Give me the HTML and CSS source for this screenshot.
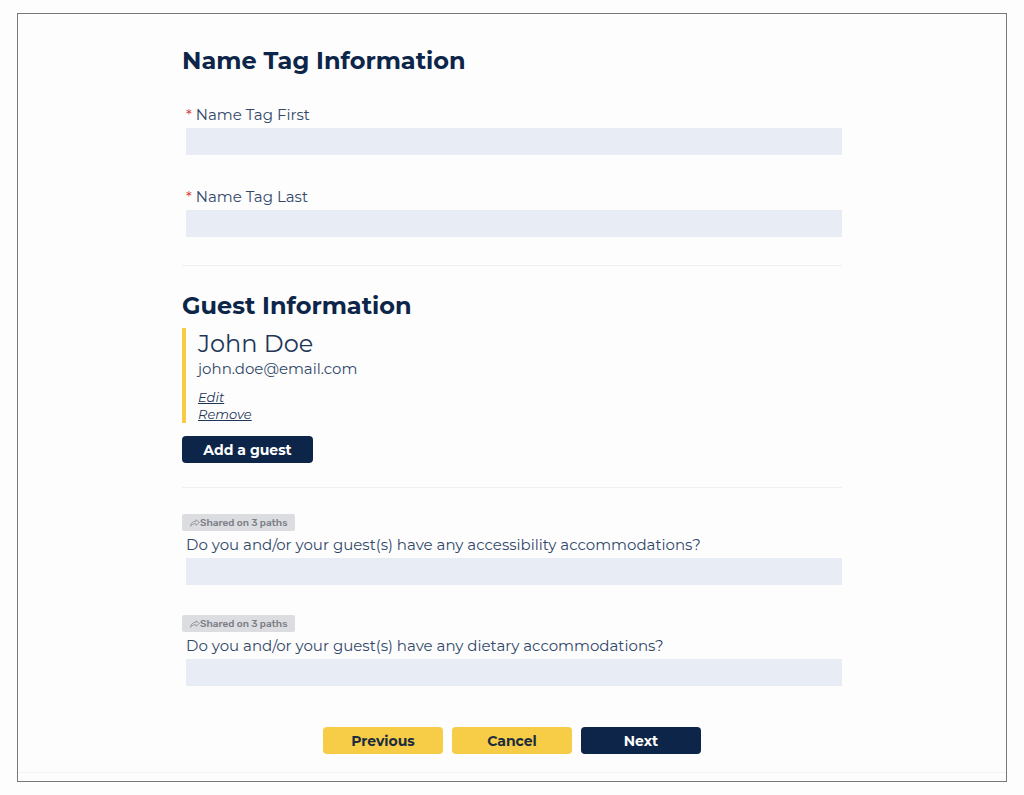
FILE: index.html
```
<!DOCTYPE html>
<html lang="en">
<head>
  <meta charset="UTF-8">
  <meta name="viewport" content="width=device-width, initial-scale=1">
  <title>Event Registration</title>
  <link rel="stylesheet" href="styles.css">
</head>
<body>
  <main class="page">
    <form class="form">
      <section class="section">
        <h2>Name Tag Information</h2>
        <div class="field name-field">
          <label for="tagFirst"><span class="required">*</span> Name Tag First</label>
          <input type="text" id="tagFirst" required>
        </div>
        <div class="field name-field">
          <label for="tagLast"><span class="required">*</span> Name Tag Last</label>
          <input type="text" id="tagLast" required>
        </div>
      </section>

      <section class="section guests">
        <h2>Guest Information</h2>
        <div class="guest">
          <div class="guest-name">John Doe</div>
          <div class="guest-email">john.doe@email.com</div>
          <a href="#edit">Edit</a>
          <a href="#remove">Remove</a>
        </div>
        <button type="button" class="btn btn-dark btn-add">Add a guest</button>
      </section>

      <section class="section questions">
        <div class="question">
          <span class="badge">
            <svg class="share" viewBox="0 0 20 16" aria-hidden="true"><path d="M12 1.500 L19 7 L12 12.500 V9.500 C7 9 4 10.500 1 14.500 C1.500 8.500 5.500 4.800 12 4.500 Z"/></svg>Shared on 3 paths
          </span>
          <div class="field">
            <label for="accessibility">Do you and/or your guest(s) have any accessibility accommodations?</label>
            <input type="text" id="accessibility">
          </div>
        </div>
        <div class="question">
          <span class="badge">
            <svg class="share" viewBox="0 0 20 16" aria-hidden="true"><path d="M12 1.500 L19 7 L12 12.500 V9.500 C7 9 4 10.500 1 14.500 C1.500 8.500 5.500 4.800 12 4.500 Z"/></svg>Shared on 3 paths
          </span>
          <div class="field">
            <label for="dietary">Do you and/or your guest(s) have any dietary accommodations?</label>
            <input type="text" id="dietary">
          </div>
        </div>
      </section>

      <div class="actions">
        <button type="button" class="btn btn-yellow">Previous</button>
        <button type="button" class="btn btn-yellow">Cancel</button>
        <button type="submit" class="btn btn-dark">Next</button>
      </div>
    </form>
  </main>
</body>
</html>
```
FILE: styles.css
```
* {
  box-sizing: border-box;
}

body {
  margin: 0;
  padding: 13px 17px;
  background: #fdfdfd;
  color: #0c2548;
  font-family: Montserrat, Inter, sans-serif;
  font-size: 15px;
  line-height: 20px;
}

.page {
  border: 1px solid #77787a;
  padding: 31px 0 8px;
}

.form {
  border-bottom: 1px solid #f3f3f4;
}

.section,
.actions {
  max-width: 660px;
  margin: 0 auto;
}

.section + .section {
  border-top: 1px solid #f1f1f3;
}

h2 {
  margin: 0;
  font-size: 24px;
  line-height: 32px;
  font-weight: 700;
}

.field {
  display: flex;
  flex-direction: column;
  gap: 3px;
  padding-left: 4px;
}

.name-field {
  padding-top: 28px;
  padding-bottom: 4px;
}

.name-field:last-child {
  padding-bottom: 28px;
}

label {
  color: #31486a;
}

.required {
  color: #d93a35;
}

input {
  width: 100%;
  height: 27px;
  padding: 0 8px;
  border: none;
  background: #e8ecf5;
  color: inherit;
  font: inherit;
}

.guests {
  padding: 24px 0;
}

.guest {
  display: flex;
  flex-direction: column;
  align-items: flex-start;
  margin: 6px 0 13px;
  padding-left: 12px;
  border-left: 4px solid #f7cc46;
}

.guest-name {
  color: #1e3658;
  font-size: 24px;
  line-height: 31px;
  font-weight: 400;
}

.guest-email {
  margin-bottom: 10px;
  color: #31486a;
}

.guest a {
  color: #1e3658;
  font-size: 13px;
  line-height: 17px;
  font-style: italic;
}

.btn {
  width: 120px;
  height: 27px;
  padding: 0;
  border: none;
  border-radius: 4px;
  font: inherit;
  font-size: 14px;
  font-weight: 700;
  cursor: pointer;
}

.btn-dark {
  background: #0c2548;
  color: #fff;
}

.btn-yellow {
  background: #f7cc46;
  color: #1a2d40;
}

.btn-add {
  display: block;
  width: 131px;
}

.questions {
  display: flex;
  flex-direction: column;
  gap: 30px;
  padding-top: 26px;
}

.question {
  display: flex;
  flex-direction: column;
  align-items: flex-start;
  gap: 4px;
}

.question .field {
  width: 100%;
}

.badge {
  display: flex;
  align-items: center;
  height: 17px;
  padding: 0 8px;
  border-radius: 2px;
  background: #dcdde1;
  color: #7b7e86;
  font-family: Rubik, Roboto, sans-serif;
  font-size: 10px;
  font-weight: 500;
}

.share {
  width: 10px;
  height: 8px;
  fill: none;
  stroke: #85888f;
  stroke-width: 1.5;
}

.actions {
  display: flex;
  justify-content: center;
  gap: 9px;
  padding: 41px 0 18px;
}
```
